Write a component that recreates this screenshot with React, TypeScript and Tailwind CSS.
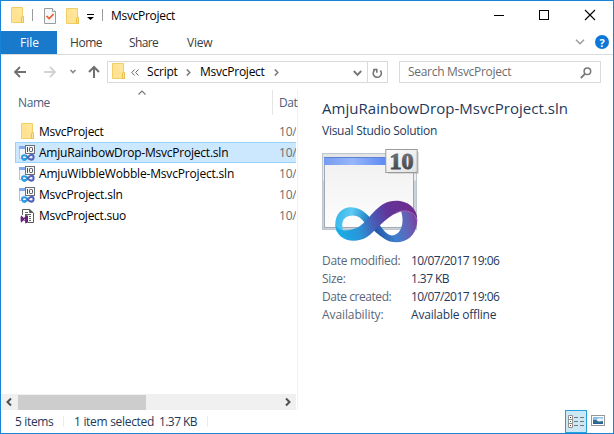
import React from 'react';

function Folder({ className = '' }: { className?: string }) {
  return (
    <svg width="14" height="17" viewBox="0 0 14 17" className={`shrink-0 ${className}`}>
      <path d="M.5 .5H11.5V10.5L12.5 11V15.5H.5Z" fill="#ffe69a" stroke="#f0cf66" />
      <path d="M1 1H4L11 12V15H1Z" fill="#ffe08a" opacity=".5" />
      <path d="M10.5 15.5V10.5L11 9.5H12.5V15.5Z" fill="#ffe69a" stroke="#e9c04c" />
    </svg>
  );
}

function CheckDoc({ className = '' }: { className?: string }) {
  return (
    <svg width="12" height="16" viewBox="0 0 12 16" className={`shrink-0 ${className}`}>
      <path d="M.5 .5H8.5L11.5 3.5V15.5H.5Z" fill="#f5f7f9" stroke="#9a9d9f" />
      <path d="M8.5 .5V3.5H11.5" fill="#fff" stroke="#9a9d9f" />
      <path d="M2.5 8L5.2 10.6L9.6 6" fill="none" stroke="#f05a28" strokeWidth="1.7" />
    </svg>
  );
}

function SlnIcon() {
  return (
    <svg width="17" height="16" viewBox="0 0 17 16" className="block shrink-0">
      <rect x=".5" y="1.5" width="14" height="12" fill="#f1f4fb" stroke="#bcc5d8" />
      <path d="M0 1H7V4H0Z" fill="#82a9ee" />
      <rect x="6.5" y=".5" width="9" height="8" fill="#fbfbfb" stroke="#6b7078" />
      <path d="M8.5 2V7" stroke="#4a4f56" />
      <rect x="10.5" y="2.5" width="3" height="4" rx=".8" fill="none" stroke="#4a4f56" />
      <path d="M9 12.2C6.5 9.6 3.2 9.6 3 12.2C3.2 15.2 6.5 15 8.5 12.7" fill="none" stroke="#2e9ade" strokeWidth="2" />
      <path d="M5 14.8C9 14.6 9.5 9.8 12.4 9.8C15.4 10 15.4 14.6 12.2 14.8C10.4 14.8 9.5 13.6 8.3 12.2" fill="none" stroke="#5265bb" strokeWidth="2" />
      <path d="M3.5 14.2C5 15.2 6.8 14.6 8 13.2" fill="none" stroke="#27a5e3" strokeWidth="2" />
    </svg>
  );
}

function SuoIcon() {
  return (
    <svg width="17" height="16" viewBox="0 0 17 16" className="block shrink-0">
      <path d="M3.5 7V1.5H10.5L14.5 4.5V14.5H9" fill="#fff" stroke="#5a5a5a" />
      <path d="M10 1L14.5 1.5V5H10Z" fill="#fff" />
      <path d="M10.5 1.2V4.5H14L10.5 1.2Z" fill="#555" stroke="#333" strokeWidth=".6" />
      <path d="M6 4.5H9M6 6.5H12M10 8.5H12M10 10.5H12M10 12.5H12" stroke="#666" />
      <path d="M2.8 9L7 13V9L2.8 13Z" fill="none" stroke="#68217a" strokeWidth="1.5" />
      <path d="M6.2 6.7L9 7.8V14.4L6.2 15.5ZM1.6 8.4L3 9V13L1.6 13.6Z" fill="#68217a" />
    </svg>
  );
}

function SolutionPreview() {
  return (
    <svg width="98" height="96" viewBox="0 0 98 96" className="block">
      <defs>
        <linearGradient id="page" x1="0" y1="0" x2="0" y2="1">
          <stop offset="0" stopColor="#f0f0f1" />
          <stop offset="1" stopColor="#fdfdfd" />
        </linearGradient>
        <linearGradient id="frame" x1="0" y1="0" x2="0" y2="1">
          <stop offset="0" stopColor="#e3e4e6" />
          <stop offset=".35" stopColor="#eceef0" />
          <stop offset=".36" stopColor="#ccd2da" />
          <stop offset="1" stopColor="#ccd2db" />
        </linearGradient>
        <linearGradient id="bar" x1="0" y1="0" x2="1" y2="0">
          <stop offset="0" stopColor="#769cf0" />
          <stop offset=".45" stopColor="#97b6fa" />
          <stop offset="1" stopColor="#5a88f2" />
        </linearGradient>
        <linearGradient id="badge" x1="0" y1="0" x2="1" y2="1">
          <stop offset="0" stopColor="#fff" />
          <stop offset="1" stopColor="#e0e0e0" />
        </linearGradient>
        <linearGradient id="digit" x1="0" y1="0" x2="0" y2="1">
          <stop offset="0" stopColor="#7b7f85" />
          <stop offset="1" stopColor="#383c42" />
        </linearGradient>
        <linearGradient id="ribbon" x1="14" y1="86" x2="92" y2="60" gradientUnits="userSpaceOnUse">
          <stop offset="0" stopColor="#16b1e8" />
          <stop offset=".28" stopColor="#2a94d8" />
          <stop offset=".5" stopColor="#4b58b3" />
          <stop offset=".68" stopColor="#61349a" />
          <stop offset="1" stopColor="#702c8c" />
        </linearGradient>
        <linearGradient id="left" x1="14" y1="64" x2="54" y2="76" gradientUnits="userSpaceOnUse">
          <stop offset="0" stopColor="#35b4e8" />
          <stop offset=".35" stopColor="#5ccbf3" />
          <stop offset=".7" stopColor="#2c8dcb" />
          <stop offset="1" stopColor="#1b5496" />
        </linearGradient>
        <linearGradient id="right" x1="50" y1="82" x2="95" y2="70" gradientUnits="userSpaceOnUse">
          <stop offset="0" stopColor="#1d4f9e" />
          <stop offset=".45" stopColor="#3f80cf" />
          <stop offset=".8" stopColor="#6560b5" />
          <stop offset="1" stopColor="#7d3f9f" />
        </linearGradient>
      </defs>
      <rect x=".5" y="4.5" width="94" height="76" fill="url(#frame)" stroke="#c0c6ce" />
      <rect x="2.5" y="8.5" width="89" height="70" fill="url(#page)" stroke="#a0a9b6" />
      <rect x="2" y="8" width="63" height="8" fill="url(#bar)" />
      <path d="M2 8.5H65" stroke="#5e82d0" />
      <path d="M13.3 76C13.3 65 20 58.3 29 58.3C41 58.3 47 68 56 77L49 84C44 76 40 66.5 31 66.5C24 66.5 20 70 20.3 77L21 82L15 83Z" fill="url(#left)" />
      <path d="M47 76L55 72C60 79 64 86 70 86.5C79 86 83 74 79 62L93 62C97 70 95.5 82 88 88.5C81 94.5 70 95 62 89.5C56 86 51 81 47 76Z" fill="url(#right)" />
      <path d="M13.3 75C15 84 31 82 38 77C50 68 56 51.7 74 51.7C88 51.7 95.5 61 95.3 72C93 64 84 60 76 63.5C63 68 54 82 45 88C32 96 13 91 13.3 75Z" fill="url(#ribbon)" />
      <path d="M73 64.7C82 59 94 62.5 95 72" fill="none" stroke="#b77fca" strokeWidth=".7" />
      <path d="M66 3H97V25H66Z" fill="#999" opacity=".3" />
      <rect x="63.8" y=".5" width="31.4" height="23" fill="url(#badge)" stroke="#9a9a9a" />
      <text x="79.5" y="20" textAnchor="middle" fontFamily="'Liberation Serif', serif" fontWeight="700" fontSize="24" fill="url(#digit)" stroke="url(#digit)" strokeWidth="1">10</text>
    </svg>
  );
}

function Arrow({ d, className, w = 1.8 }: { d: string; className: string; w?: number }) {
  return (
    <svg width="14" height="14" viewBox="0 0 14 14" className={`shrink-0 ${className}`}>
      <path d={d} fill="none" stroke="currentColor" strokeWidth={w} />
    </svg>
  );
}

function TitleBar() {
  return (
    <div className="flex h-[30px] shrink-0 items-start">
      <Folder className="ml-[10px] mt-[6px]" />
      <div className="ml-[7px] mt-[8px] h-[12px] w-px bg-[#9b9b9b]" />
      <CheckDoc className="ml-[11px] mt-[7px]" />
      <Folder className="ml-[10px] mt-[7px]" />
      <svg width="7" height="6" viewBox="0 0 7 6" className="ml-[7px] mt-[13px]">
        <path d="M0 0H7V1H0ZM0 3H7L3.5 6Z" fill="#000" />
      </svg>
      <div className="ml-[8px] mt-[8px] h-[12px] w-px bg-[#9b9b9b]" />
      <span className="ml-[8px] mt-[6px] leading-[18px] tracking-[-0.3px] text-black">MsvcProject</span>
      <div className="ml-auto flex text-black">
        <svg width="119" height="30" viewBox="0 0 119 30" fill="none" stroke="currentColor">
          <path d="M0 14.5H10" />
          <rect x="45.5" y="9.5" width="9" height="9" />
          <path d="M91 9L101 19M101 9L91 19" strokeWidth="1.1" />
        </svg>
      </div>
    </div>
  );
}

function Tabs() {
  return (
    <div className="flex h-[24px] shrink-0 items-stretch border-b border-[#dadbdc] leading-[23px] text-[#3b3b3b]">
      <div className="w-[56px] bg-[#1979ca] pl-[19px] text-white">File</div>
      <span className="ml-[13px] w-[59px] tracking-[-0.45px]">Home</span>
      <span className="w-[58px] tracking-[-0.6px]">Share</span>
      <span className="tracking-[-0.2px]">View</span>
      <svg width="10" height="6" viewBox="0 0 10 6" className="ml-auto mt-[8px] text-[#9b9b9b]">
        <path d="M1 .8L5 4.8L9 .8" fill="none" stroke="currentColor" strokeWidth="1.4" />
      </svg>
      <div className="ml-[10px] mr-[4px] mt-[4px] flex h-[14px] w-[14px] items-center justify-center rounded-full bg-[#0b78d7] text-[11px] font-bold text-white">?</div>
    </div>
  );
}

function NavBar() {
  return (
    <div className="flex h-[35px] shrink-0 items-start pt-[6px]">
      <Arrow className="ml-[12px] mt-[4px] text-[#707070]" d="M13 7H2M7 2L2 7L7 12" />
      <Arrow className="ml-[16px] mt-[4px] text-[#d2d2d2]" d="M1 7H12M7 2L12 7L7 12" />
      <svg width="8" height="6" viewBox="0 0 8 6" className="ml-[12px] mt-[8px]">
        <path d="M1.5 1L4 3.5L6.5 1" fill="none" stroke="#888" strokeWidth="1.6" />
      </svg>
      <Arrow className="ml-[10px] mt-[4px] text-[#707070]" d="M7 13V2M2 7L7 2L12 7" w={2} />
      <div className="ml-[6px] flex h-[22px] w-[281px] items-start border border-[#d9d9d9]">
        <Folder className="ml-[4px] mt-[1px]" />
        <svg width="8" height="7" viewBox="0 0 8 7" className="ml-[5px] mt-[7px]">
          <path d="M3.7 .5L.8 3.5L3.7 6.5M7.5 .5L4.6 3.5L7.5 6.5" fill="none" stroke="#666" />
        </svg>
        <span className="ml-[8px] w-[39px] leading-[20px] tracking-[-0.2px] text-black">Script</span>
        <svg width="5" height="7" viewBox="0 0 5 7" className="mt-[7px]">
          <path d="M.8 .5L3.8 3.5L.8 6.5" fill="none" stroke="#777" strokeWidth="1.5" />
        </svg>
        <span className="ml-[9px] w-[74px] leading-[20px] tracking-[-0.25px] text-black">MsvcProject</span>
        <svg width="5" height="7" viewBox="0 0 5 7" className="mt-[7px]">
          <path d="M.8 .5L3.8 3.5L.8 6.5" fill="none" stroke="#777" strokeWidth="1.5" />
        </svg>
        <svg width="9" height="7" viewBox="0 0 9 7" className="ml-auto mt-[8px]">
          <path d="M.8 1L4.5 4.8L8.2 1" fill="none" stroke="#777" strokeWidth="1.9" />
        </svg>
        <div className="ml-[5px] h-[20px] w-px bg-[#d9d9d9]" />
        <svg width="11" height="12" viewBox="0 0 11 12" className="ml-[4px] mr-[4px] mt-[5px]">
          <path d="M2.6 2.8A4.1 4.1 0 1 0 8.3 3.1M1.2 2.2H4.8V5.4" fill="none" stroke="#707070" strokeWidth="1.5" transform="matrix(1 0 0 1 0 .3)" />
        </svg>
      </div>
      <div className="ml-[11px] flex h-[22px] w-[202px] items-start border border-[#d9d9d9]">
        <span className="ml-[8px] leading-[20px] tracking-[-0.3px] text-[#6d6d6d]">Search MsvcProject</span>
        <svg width="12" height="12" viewBox="0 0 12 12" className="ml-auto mr-[8px] mt-[5px]">
          <circle cx="7.4" cy="4.3" r="3.3" fill="none" stroke="#777" strokeWidth="1.5" />
          <path d="M5 6.8L.8 11" stroke="#777" strokeWidth="1.8" />
        </svg>
      </div>
    </div>
  );
}

type Row = { name: string; kind: 'folder' | 'sln' | 'suo'; tracking: string; selected?: boolean };

const rows: Row[] = [
  { name: 'MsvcProject', kind: 'folder', tracking: 'tracking-[-0.25px]' },
  { name: 'AmjuRainbowDrop-MsvcProject.sln', kind: 'sln', tracking: 'tracking-[-0.22px]', selected: true },
  { name: 'AmjuWibbleWobble-MsvcProject.sln', kind: 'sln', tracking: 'tracking-[-0.18px]' },
  { name: 'MsvcProject.sln', kind: 'sln', tracking: 'tracking-[-0.2px]' },
  { name: 'MsvcProject.suo', kind: 'suo', tracking: 'tracking-[-0.25px]' },
];

function FileList() {
  return (
    <div className="flex w-[297px] shrink-0 flex-col border-r border-[#f0f0f0]">
      <div className="flex h-[31px] whitespace-nowrap text-[#4c607a]">
        <span className="w-[118px] pl-[17px] pt-[4px] leading-[18px] tracking-[-0.4px]">Name</span>
        <svg width="8" height="5" viewBox="0 0 8 5" className="ml-[19px]">
          <path d="M.5 4.5L4 1L7.5 4.5" fill="none" stroke="#777" strokeWidth="1.1" />
        </svg>
        <div className="ml-auto h-[25px] w-[25px] border-l border-[#e5e5e5] pl-[6px] pt-[4px] leading-[18px] tracking-[-0.4px]">Dat</div>
      </div>
      {rows.map((r) => (
        <div key={r.name} className="flex h-[21px] pl-[14px]">
          <div className={`flex min-w-0 flex-1 items-center overflow-hidden whitespace-nowrap border border-r-0 ${r.selected ? 'border-[#99d1ff] bg-[#cce8ff]' : 'border-transparent'}`}>
            <div className="flex w-[23px] shrink-0 items-center pl-[3px]">
              {r.kind === 'folder' ? <Folder className="ml-[2px]" /> : r.kind === 'sln' ? <SlnIcon /> : <SuoIcon />}
            </div>
            <span className={`w-[240px] shrink-0 leading-[20px] text-black ${r.tracking}`}>{r.name}</span>
            <span className="leading-[20px] tracking-[-0.2px] text-[#6d6d6d]">10/</span>
          </div>
          <div className="w-px" />
        </div>
      ))}
      <div className="mt-auto flex h-[16px] w-[295px] items-center bg-[#f0f0f0]">
        <svg width="17" height="16" viewBox="0 0 17 16">
          <path d="M10 4.5L6.5 8L10 11.5" fill="none" stroke="#505050" strokeWidth="2" />
        </svg>
        <div className="h-[15px] w-[128px] bg-[#cdcdcd]" />
        <svg width="17" height="16" viewBox="0 0 17 16" className="ml-auto">
          <path d="M7 4.5L10.5 8L7 11.5" fill="none" stroke="#505050" strokeWidth="2" />
        </svg>
      </div>
    </div>
  );
}

const details = [
  { label: 'Date modified:', value: '10/07/2017 19:06', labelTracking: 'tracking-[-0.3px]', valueTracking: 'tracking-[-0.57px]' },
  { label: 'Size:', value: '1.37 KB', labelTracking: 'tracking-[-0.3px]', valueTracking: 'tracking-[-0.57px]' },
  { label: 'Date created:', value: '10/07/2017 19:06', labelTracking: 'tracking-[-0.45px]', valueTracking: 'tracking-[-0.57px]' },
  { label: 'Availability:', value: 'Available offline', labelTracking: 'tracking-[-0.1px]', valueTracking: 'tracking-[-0.2px]' },
];

function Preview() {
  return (
    <div className="flex flex-1 flex-col pl-[24px] pt-[8px] text-[#1e395b]">
      <h1 className="h-[24px] whitespace-nowrap text-[15px] leading-[20px] tracking-[0.03px]">AmjuRainbowDrop-MsvcProject.sln</h1>
      <p className="h-[27px] leading-[18px] tracking-[-0.27px]">Visual Studio Solution</p>
      <SolutionPreview />
      <dl className="mt-[7px]">
        {details.map((d) => (
          <div key={d.label} className="flex h-[18px] leading-[18px]">
            <dt className={`w-[89px] text-[#5a6779] ${d.labelTracking}`}>{d.label}</dt>
            <dd className={d.valueTracking}>{d.value}</dd>
          </div>
        ))}
      </dl>
    </div>
  );
}

function StatusBar() {
  return (
    <div className="flex h-[23px] shrink-0 text-[#1e395b]">
      <span className="w-[62px] pl-[14px] leading-[23px] tracking-[-0.35px]">5 items</span>
      <div className="mt-[6px] h-[11px] w-px bg-[#ececec]" />
      <span className="w-[85px] whitespace-nowrap pl-[10px] leading-[23px] tracking-[-0.3px]">1 item selected</span>
      <span className="w-[58px] whitespace-nowrap pl-[10px] leading-[23px] tracking-[-0.57px]">1.37 KB</span>
      <div className="mt-[6px] h-[11px] w-px bg-[#ececec]" />
      <div className="ml-auto mr-[4px] flex h-[23px] w-[22px] items-center justify-center border border-[#26a0da] bg-[#cce8f6]">
        <svg width="16" height="13" viewBox="0 0 16 13">
          <path d="M.5 .5H4.5V12.5H.5ZM.5 4.5H4.5M.5 8.5H4.5" fill="#fff" stroke="#929292" />
          <path d="M2 2H3V3H2Z" fill="#222" />
          <path d="M2 6H3V7H2Z" fill="#258a5c" />
          <path d="M2 10H3V11H2Z" fill="#8b1f1f" />
          <path d="M6 2.5H10M12 2.5H16M6 6.5H10M12 6.5H16M6 10.5H10M12 10.5H16" stroke="#777" />
        </svg>
      </div>
      <svg width="14" height="11" viewBox="0 0 14 11" className="mr-[8px] mt-[5px]">
        <rect x=".5" y=".5" width="13" height="10" fill="#fff" stroke="#969696" />
        <path d="M2 2H12V9H2Z" fill="#8fbde9" />
        <path d="M6 4L9 3L12 4V6H6Z" fill="#e8f2fa" />
        <path d="M2 5L5 5L8 7L12 6V9H2Z" fill="#356b82" />
        <path d="M2 8H12V9H2Z" fill="#285f9e" />
      </svg>
    </div>
  );
}

export default function App() {
  return (
    <div className="flex h-[434px] w-[614px] flex-col overflow-hidden border border-[#1883d7] bg-white font-['Open_Sans','Noto_Sans',sans-serif] text-[12px]">
      <TitleBar />
      <Tabs />
      <NavBar />
      <div className="flex min-h-0 flex-1">
        <FileList />
        <Preview />
      </div>
      <StatusBar />
    </div>
  );
}
